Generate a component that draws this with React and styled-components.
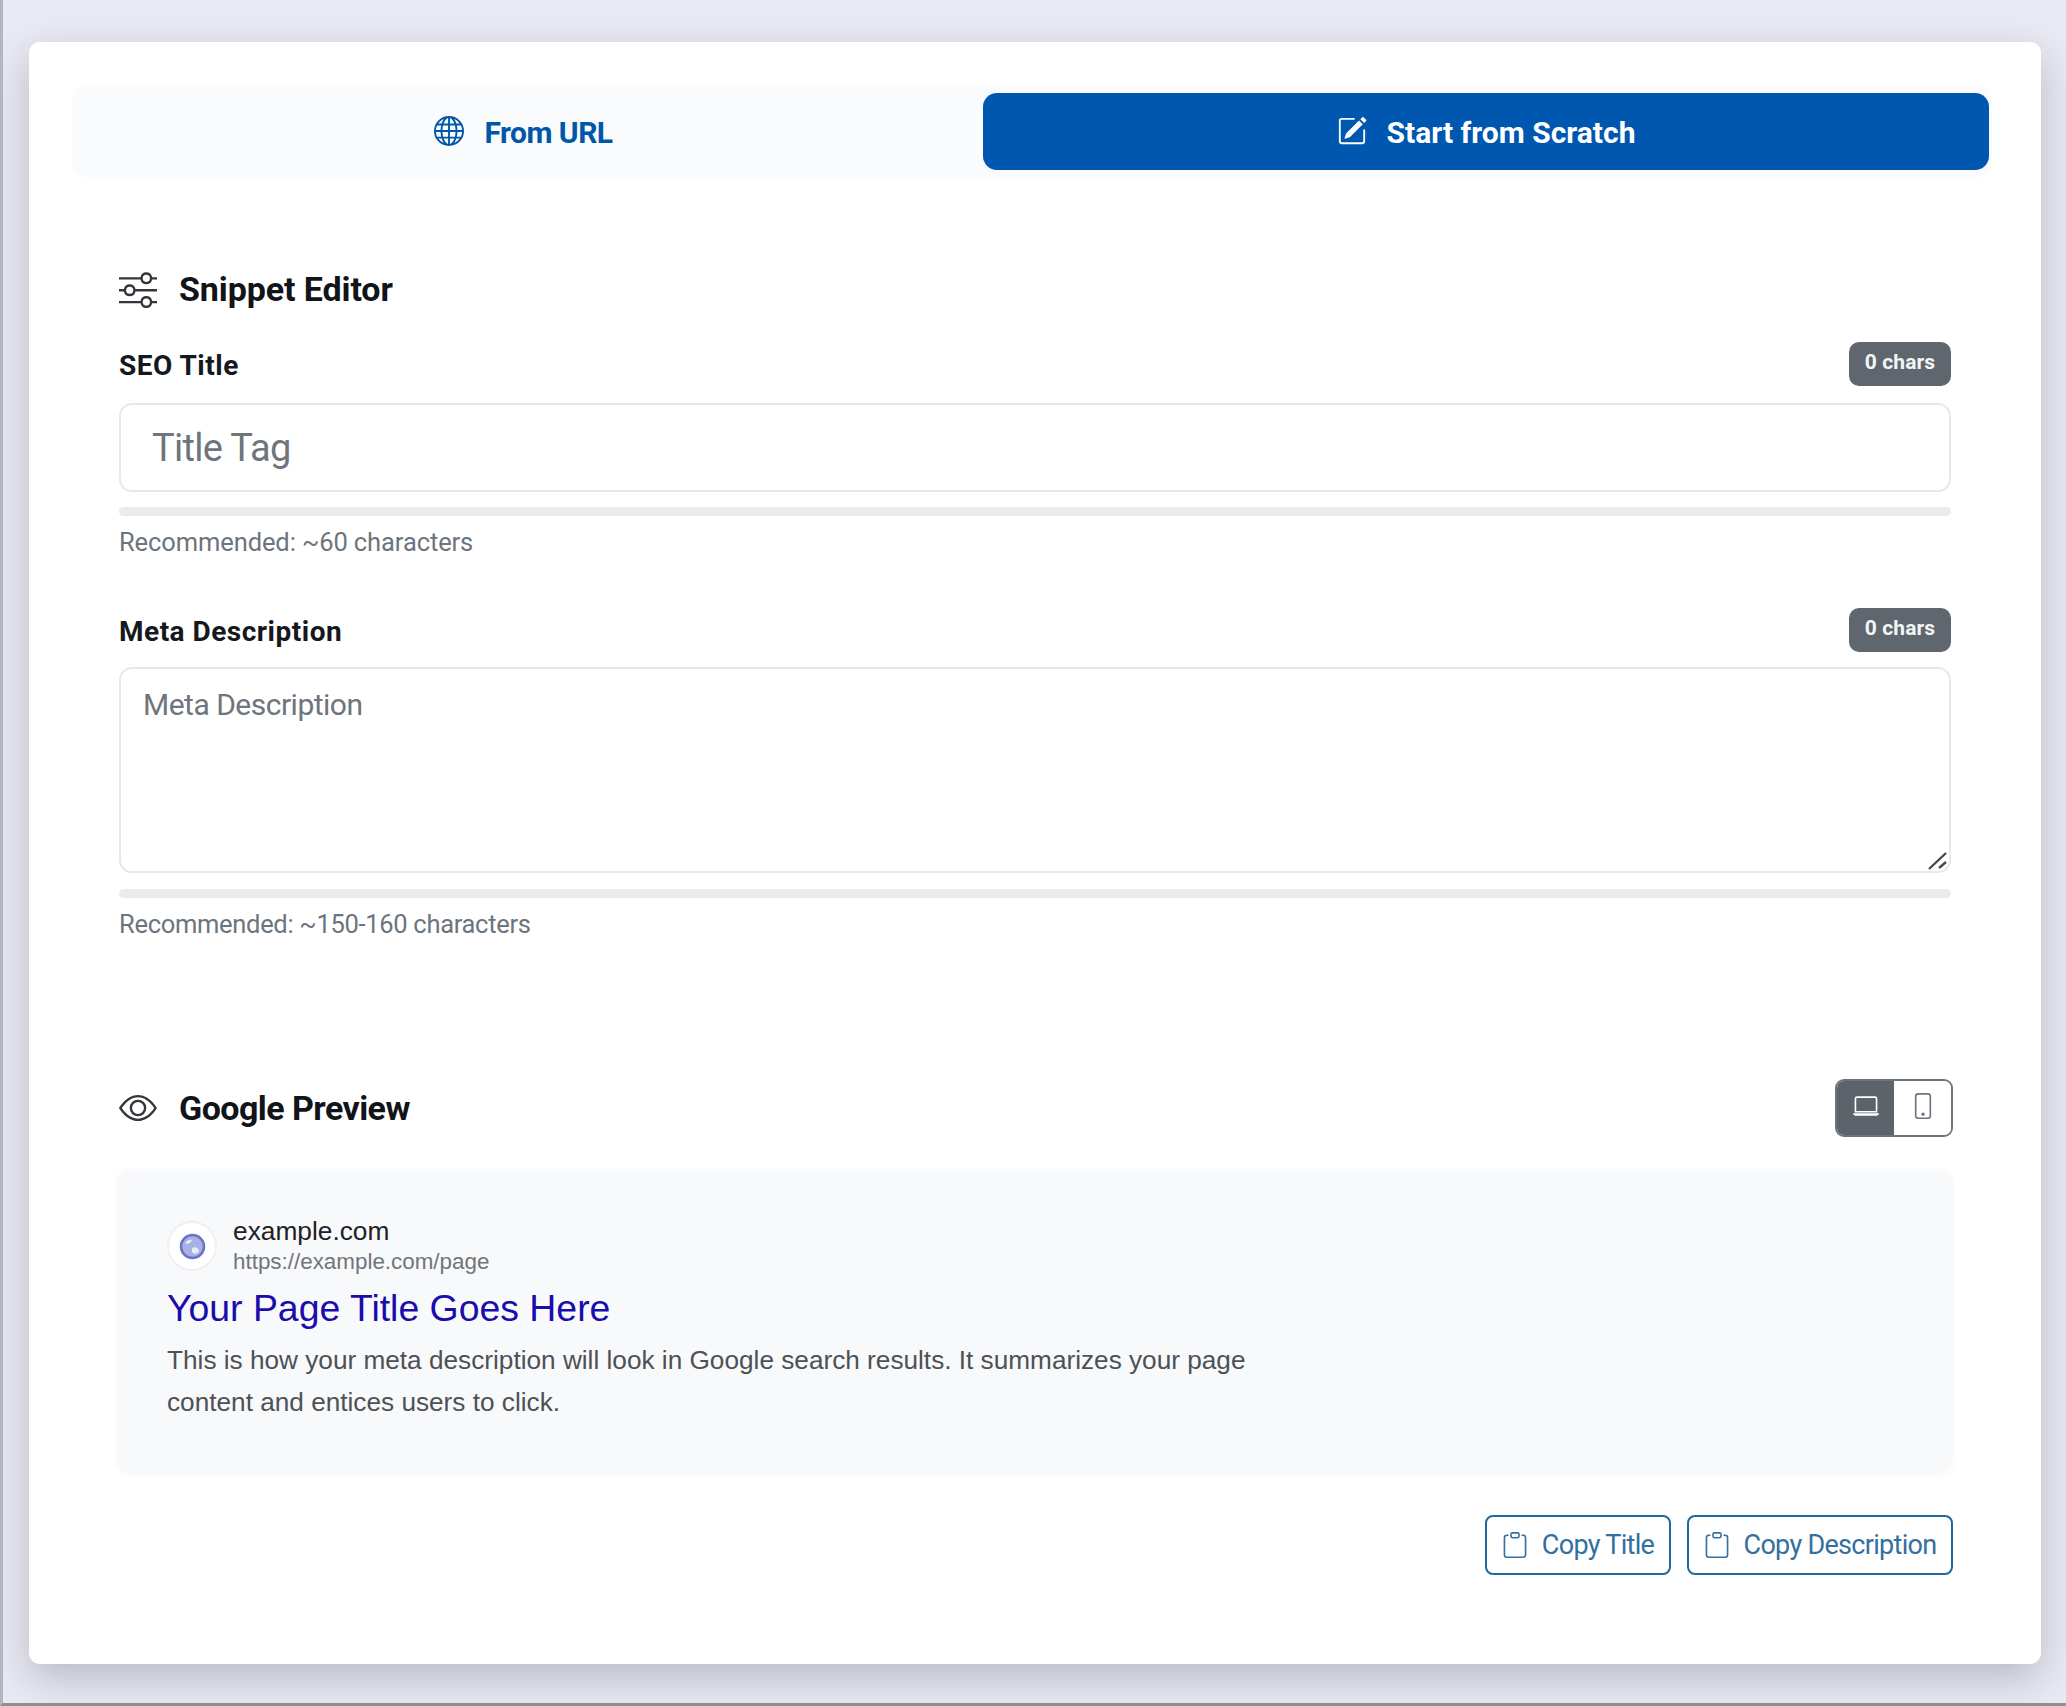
import React from 'react';
import styled, { createGlobalStyle } from 'styled-components';
import {
    BsClipboard,
    BsEye,
    BsGlobe,
    BsLaptop,
    BsPencilSquare,
    BsPhone,
    BsSliders,
} from 'react-icons/bs';

const GlobalStyle = createGlobalStyle`
    html, body {
        margin: 0;
        padding: 0;
        background: #e9eaf3;
    }
    * {
        box-sizing: border-box;
    }
`;

const Page = styled.div`
    width: 2066px;
    height: 1706px;
    overflow: hidden;
    padding: 42px 25px 0 26px;
    background: #e9eaf3;
    border-left: 3px solid #b4b5bd;
    border-bottom: 3px solid #8f9096;
    font-family: Roboto, 'Liberation Sans', sans-serif;
`;

const Card = styled.main`
    height: 1622px;
    padding: 43px 0 0;
    background: #fff;
    border-radius: 11px;
    box-shadow: 0 14px 40px rgba(30, 30, 40, 0.24);
`;

const Tabs = styled.div`
    display: grid;
    grid-template-columns: 911px 1006px;
    margin: 0 49px 0 43px;
    height: 92px;
    padding: 8px 0 7px;
    background: #fafbfc;
    border-radius: 13px;
`;

const Tab = styled.button`
    display: flex;
    align-items: center;
    justify-content: center;
    gap: 20px;
    padding: ${(p) => (p.$active ? '2px 0 0' : '2px 8px 0 0')};
    border: 0;
    border-radius: 14px;
    background: ${(p) => (p.$active ? '#0057b0' : 'transparent')};
    color: ${(p) => (p.$active ? '#fff' : '#0057a8')};
    font: 700 30px/1 Roboto, sans-serif;
    letter-spacing: ${(p) => (p.$active ? '0' : '-0.5px')};

    svg {
        width: 30px;
        height: 30px;
        margin-top: -4px;
    }
`;

const Section = styled.section`
    padding-top: ${(p) => p.$top};
    margin: 0 90px;
`;

const Heading = styled.div`
    display: flex;
    align-items: center;
    justify-content: space-between;
    height: 44px;
`;

const HeadingTitle = styled.h2`
    display: flex;
    align-items: center;
    gap: 22px;
    margin: 0;
    color: #111418;
    font: 700 34px/44px Roboto, sans-serif;
    letter-spacing: ${(p) => p.$tracking};

    svg {
        width: 38px;
        height: 38px;
        color: #33373c;
    }
`;

const LabelRow = styled.div`
    display: flex;
    align-items: center;
    justify-content: space-between;
    height: 44px;
    margin-top: ${(p) => p.$top};
`;

const Label = styled.label`
    padding-top: 3px;
    color: #15181c;
    font: 700 28px/42px Roboto, sans-serif;
    letter-spacing: 0.5px;
`;

const CharBadge = styled.span`
    display: flex;
    align-items: center;
    justify-content: center;
    width: 102px;
    height: 44px;
    padding-bottom: 4px;
    background: #5f666d;
    border-radius: 10px;
    color: #f3f5f7;
    font: 700 21px/1 Roboto, sans-serif;
    letter-spacing: 0.1px;
`;

const TitleInput = styled.input`
    display: block;
    width: 100%;
    height: 89px;
    margin-top: 17px;
    padding: 0 31px;
    background: #fff;
    border: 2px solid #e6e8ea;
    border-radius: 13px;
    font: 400 38px Roboto, sans-serif;
    letter-spacing: -0.7px;
    outline: none;

    &::placeholder {
        color: #6e757c;
        opacity: 1;
    }
`;

const DescriptionWrap = styled.div`
    position: relative;
    height: 206px;
    margin-top: 15px;
`;

const DescriptionInput = styled.textarea`
    display: block;
    width: 100%;
    height: 100%;
    padding: 16px 22px;
    background: #fff;
    border: 2px solid #e6e8ea;
    border-radius: 13px;
    font: 400 30px/1.3 Roboto, sans-serif;
    letter-spacing: -0.5px;
    outline: none;
    resize: none;

    &::placeholder {
        color: #6e757c;
        opacity: 1;
    }
`;

const ResizeGrip = styled.svg`
    position: absolute;
    right: 3px;
    bottom: 3px;
    width: 20px;
    height: 18px;
    pointer-events: none;
`;

const Meter = styled.div`
    height: 9px;
    margin-top: ${(p) => p.$top};
    background: #e9ecef;
    border-radius: 5px;
`;

const Hint = styled.div`
    margin-top: 11px;
    color: #6c757d;
    font: 400 25.5px/30px Roboto, sans-serif;
    letter-spacing: ${(p) => p.$tracking};
`;

const ViewToggle = styled.div`
    display: flex;
    height: 58px;
    margin-right: -2px;
    overflow: hidden;
    border: 2px solid #6c757d;
    border-radius: 9px;
`;

const ViewButton = styled.button`
    display: flex;
    align-items: center;
    justify-content: center;
    width: 57px;
    padding: 0 0 4px;
    border: 0;
    background: ${(p) => (p.$active ? '#5c636a' : '#fff')};
    color: ${(p) => (p.$active ? '#fff' : '#6c757d')};

    svg {
        width: 26px;
        height: 26px;
    }
`;

const PreviewCard = styled.article`
    height: 303px;
    margin: 39px -2px 0 -2px;
    padding: 49px 50px 0;
    background: #f8f9fb;
    border-radius: 13px;
    box-shadow: 0 2px 6px rgba(0, 0, 0, 0.04);
    font-family: 'Liberation Sans', Arial, sans-serif;
`;

const SiteRow = styled.div`
    display: flex;
    align-items: center;
    gap: 16px;
`;

const Favicon = styled.div`
    display: flex;
    align-items: center;
    justify-content: center;
    width: 50px;
    height: 50px;
    margin-top: -2px;
    background: #fff;
    border: 2px solid #eff0f3;
    border-radius: 50%;

    svg {
        width: 27px;
        height: 27px;
    }
`;

const SiteName = styled.div`
    color: #202124;
    font-size: 26.3px;
    line-height: 26px;
`;

const SiteUrl = styled.div`
    margin-top: 4px;
    color: #70757a;
    font-size: 22.4px;
    line-height: 28px;
`;

const ResultTitle = styled.div`
    margin-top: 8px;
    color: #1a0dab;
    font-size: 37.4px;
    line-height: 48px;
`;

const ResultText = styled.p`
    max-width: 1110px;
    margin: 7px 0 0;
    color: #4d5156;
    font-size: 26.2px;
    line-height: 42px;
`;

const Actions = styled.div`
    display: flex;
    justify-content: flex-end;
    gap: 16px;
    margin: 43px -2px 0 0;
`;

const CopyButton = styled.button`
    display: flex;
    align-items: center;
    justify-content: center;
    gap: 14px;
    width: ${(p) => p.$width};
    height: 60px;
    padding: 0;
    background: #fff;
    border: 2px solid #1f6a9c;
    border-radius: 8px;
    color: #33709f;
    font: 400 27px/1 Roboto, sans-serif;
    letter-spacing: -0.7px;

    svg {
        width: 26px;
        height: 26px;
    }
`;

function App() {
    return (
        <Page>
            <GlobalStyle />
            <Card>
                <Tabs>
                    <Tab type="button">
                        <BsGlobe />
                        From URL
                    </Tab>
                    <Tab type="button" $active>
                        <BsPencilSquare />
                        Start from Scratch
                    </Tab>
                </Tabs>

                <Section $top="90px">
                    <Heading>
                        <HeadingTitle $tracking="-0.1px">
                            <BsSliders />
                            Snippet Editor
                        </HeadingTitle>
                    </Heading>
                    <LabelRow $top="31px">
                        <Label>SEO Title</Label>
                        <CharBadge>0 chars</CharBadge>
                    </LabelRow>
                    <TitleInput placeholder="Title Tag" />
                    <Meter $top="15px" />
                    <Hint $tracking="-0.1px">Recommended: ~60 characters</Hint>
                    <LabelRow $top="51px">
                        <Label>Meta Description</Label>
                        <CharBadge>0 chars</CharBadge>
                    </LabelRow>
                    <DescriptionWrap>
                        <DescriptionInput placeholder="Meta Description" />
                        <ResizeGrip viewBox="0 0 20 18">
                            <path
                                d="M1 17 L18 1 M11 16 L18 10"
                                stroke="#45494d"
                                strokeWidth="2.4"
                                fill="none"
                            />
                        </ResizeGrip>
                    </DescriptionWrap>
                    <Meter $top="16px" />
                    <Hint $tracking="-0.3px">Recommended: ~150-160 characters</Hint>
                </Section>

                <Section $top="147px">
                    <Heading>
                        <HeadingTitle $tracking="-0.55px">
                            <BsEye />
                            Google Preview
                        </HeadingTitle>
                        <ViewToggle>
                            <ViewButton type="button" $active>
                                <BsLaptop />
                            </ViewButton>
                            <ViewButton type="button">
                                <BsPhone />
                            </ViewButton>
                        </ViewToggle>
                    </Heading>
                    <PreviewCard>
                        <SiteRow>
                            <Favicon>
                                <svg viewBox="0 0 27 27">
                                    <circle
                                        cx="13.5"
                                        cy="13.5"
                                        r="11.5"
                                        fill="#a9b1e4"
                                        stroke="#6a74c4"
                                        strokeWidth="2.5"
                                    />
                                    <path
                                        d="M13 15 C16 13 20 15 20 18 C19 21 15 22 13 19 Z M6 10 C8 7 11 6 13 7 C12 10 9 12 6 10 Z"
                                        fill="#e6e9f9"
                                    />
                                </svg>
                            </Favicon>
                            <div>
                                <SiteName>example.com</SiteName>
                                <SiteUrl>https://example.com/page</SiteUrl>
                            </div>
                        </SiteRow>
                        <ResultTitle>Your Page Title Goes Here</ResultTitle>
                        <ResultText>
                            This is how your meta description will look in Google
                            search results. It summarizes your page content and
                            entices users to click.
                        </ResultText>
                    </PreviewCard>
                    <Actions>
                        <CopyButton type="button" $width="186px">
                            <BsClipboard />
                            Copy Title
                        </CopyButton>
                        <CopyButton type="button" $width="266px">
                            <BsClipboard />
                            Copy Description
                        </CopyButton>
                    </Actions>
                </Section>
            </Card>
        </Page>
    );
}

export default App;
